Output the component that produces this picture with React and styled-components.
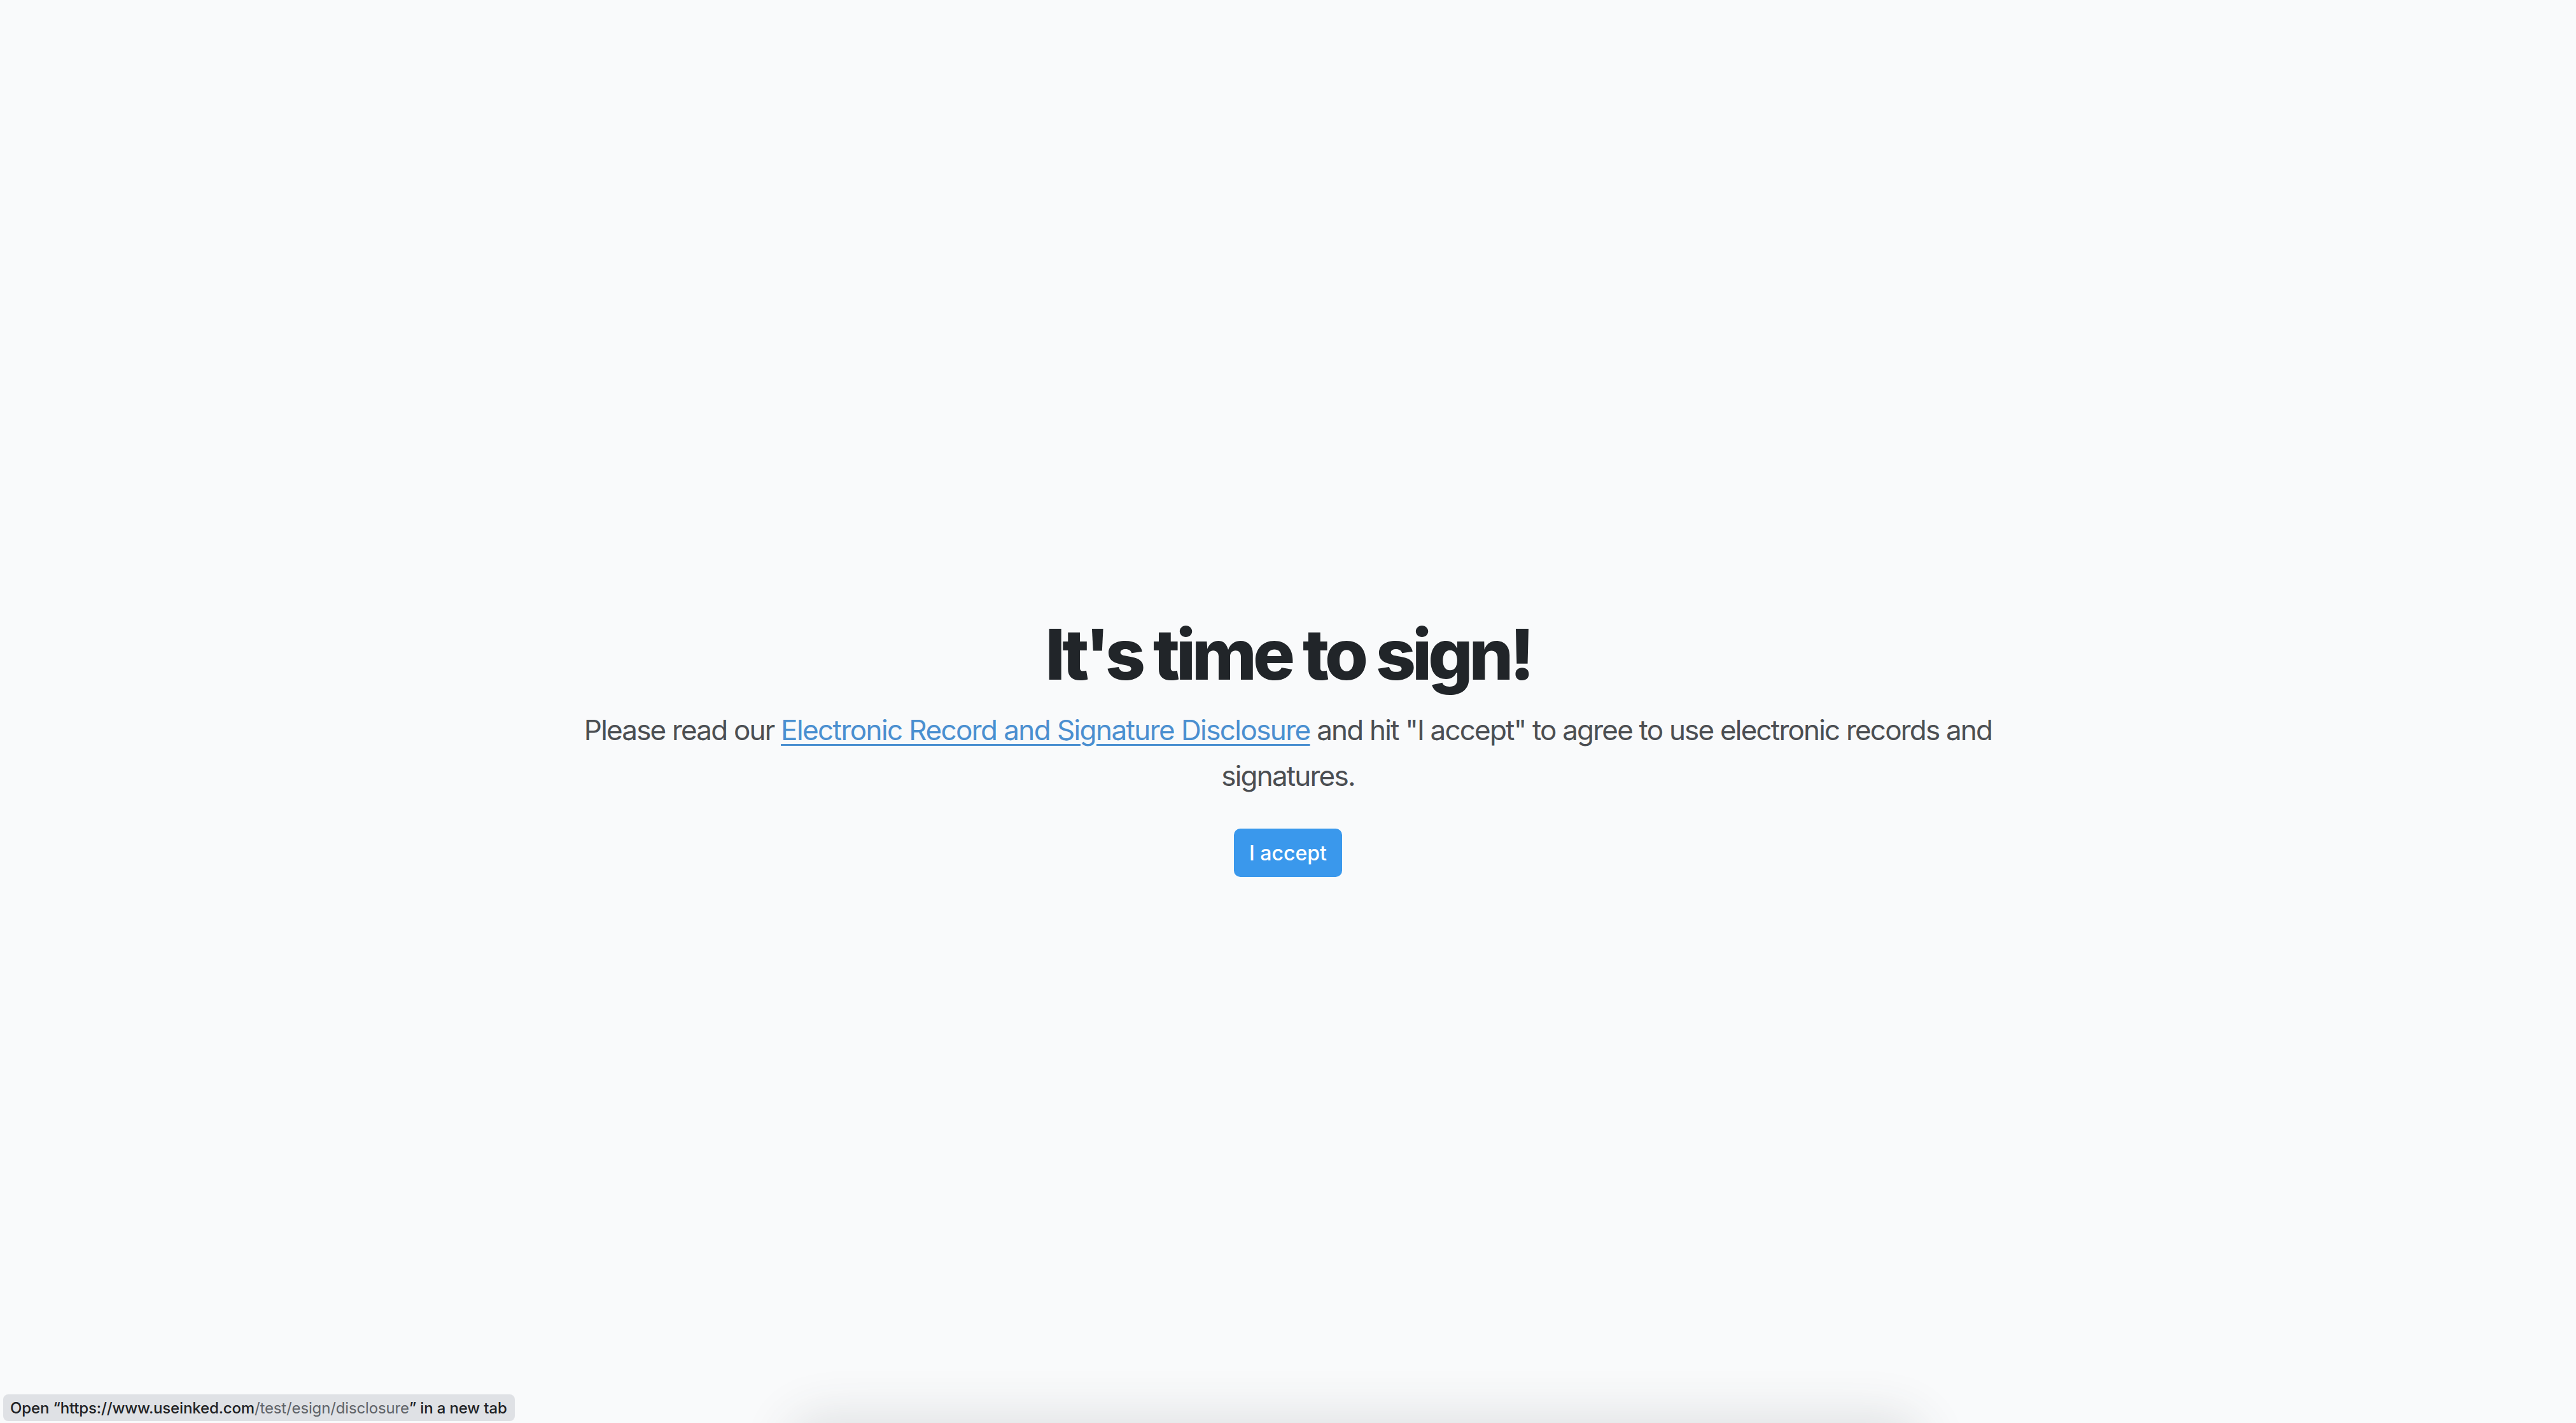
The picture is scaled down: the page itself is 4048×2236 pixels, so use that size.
import React from "react";
import styled, { createGlobalStyle } from "styled-components";

const GlobalStyle = createGlobalStyle`
  html, body {
    margin: 0;
    padding: 0;
    background: #f9fafb;
    font-family: Inter, "Noto Sans", Arial, sans-serif;
  }
  #root { min-height: 100vh; }
`;

const Page = styled.main`
  min-height: 100vh;
  box-sizing: border-box;
  padding-top: 962px;
  display: flex;
  flex-direction: column;
  align-items: center;
  overflow: hidden;
`;

const Title = styled.h1`
  margin: 0;
  font-size: 110px;
  line-height: 132px;
  font-weight: 800;
  letter-spacing: -0.055em;
  color: #212529;
  text-align: center;
`;

const Lead = styled.p`
  margin: 17px 0 0;
  max-width: 2260px;
  font-size: 44px;
  line-height: 72px;
  font-weight: 400;
  letter-spacing: -0.041em;
  color: #4b4e52;
  text-align: center;
`;

const Link = styled.a`
  color: #4a8fd0;
  letter-spacing: -0.036em;
  text-decoration: underline;
  text-decoration-thickness: 3px;
  text-underline-offset: 6px;
`;

const AcceptButton = styled.button`
  margin-top: 47px;
  height: 76px;
  padding: 0 24px;
  border: none;
  border-radius: 10px;
  background: #3a98ec;
  color: #ffffff;
  font-family: Inter, "Noto Sans", Arial, sans-serif;
  font-size: 32px;
  font-weight: 500;
  cursor: pointer;
`;

const StatusBubble = styled.div`
  position: fixed;
  left: 5px;
  bottom: 3px;
  height: 42px;
  display: flex;
  align-items: center;
  padding: 0 12px 0 11px;
  background: #dfe1e5;
  border-radius: 8px;
  font-family: Inter, "Noto Sans", Arial, sans-serif;
  font-size: 24px;
  font-weight: 500;
  letter-spacing: -0.006em;
  color: #202124;
  white-space: nowrap;
  z-index: 2;
`;

const Dim = styled.span`
  color: #5f6368;
  font-weight: 400;
`;

const BottomSheetEdge = styled.div`
  position: fixed;
  left: 1250px;
  width: 1760px;
  bottom: -120px;
  height: 120px;
  border-radius: 40px;
  background: #f9fafb;
  box-shadow: 0 0 80px 10px rgba(60, 64, 72, 0.14);
  z-index: 1;
`;

export default function App() {
  return (
    <>
      <GlobalStyle />
      <Page>
        <Title>It's time to sign!</Title>
        <Lead>
          Please read our{" "}
          <Link href="#disclosure">Electronic Record and Signature Disclosure</Link>{" "}
          and hit "I accept" to agree to use electronic records and signatures.
        </Lead>
        <AcceptButton type="button">I accept</AcceptButton>
      </Page>
      <BottomSheetEdge />
      <StatusBubble>
        Open “https://www.useinked.com<Dim>/test/esign/disclosure</Dim>” in a new tab
      </StatusBubble>
    </>
  );
}
